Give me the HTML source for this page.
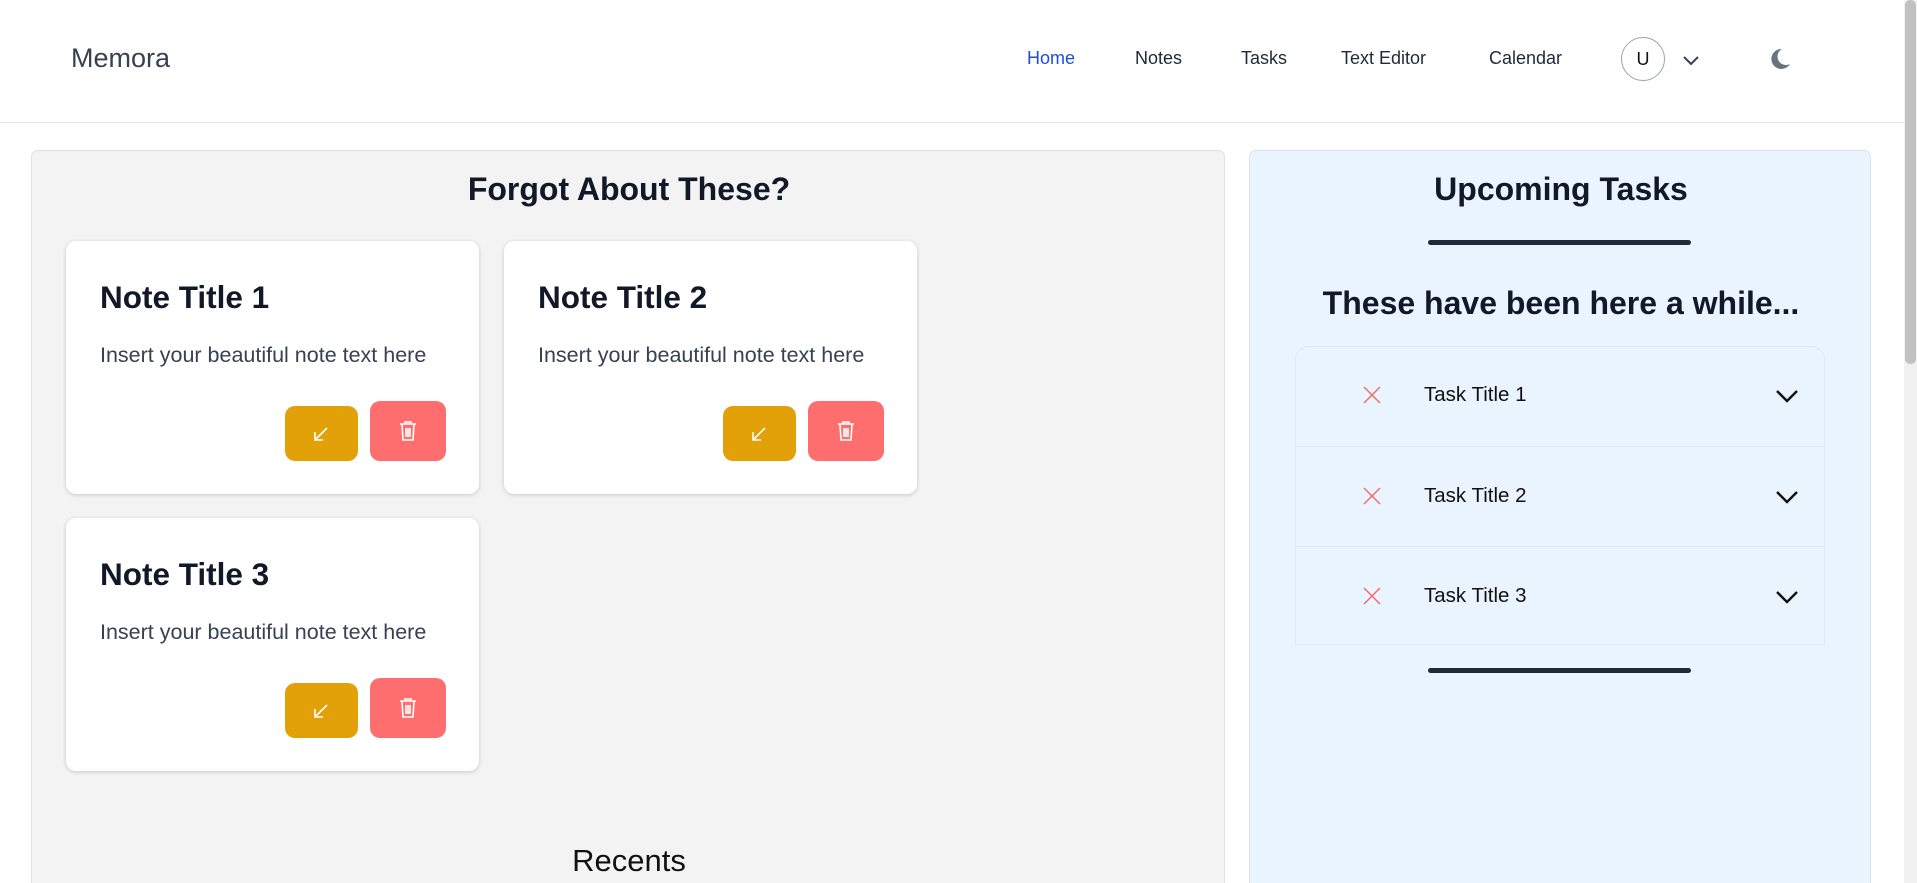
<!DOCTYPE html>
<html style="height:883px;overflow:hidden"><head><meta charset="utf-8"><style>
*{box-sizing:border-box;margin:0;padding:0}
body{width:1917px;height:883px;overflow:hidden;background:#fff;font-family:"Liberation Sans",sans-serif;position:relative;color:#111827}
.a{position:absolute}
header{position:absolute;left:0;top:0;width:1904px;height:123px;border-bottom:1px solid #e5e7eb;background:#fff}
.nav{position:absolute;top:48px;font-size:18px;color:#1f2937}
.panel{position:absolute;top:150px;height:733px;border-radius:7px 7px 0 0;border-bottom:none!important}
.h{position:absolute;font-weight:bold;font-size:32px;text-align:center;color:#111827}
.card{position:absolute;width:413px;height:253px;background:#fff;border-radius:10px;box-shadow:0 1px 4px rgba(0,0,0,.18)}
.card .t{position:absolute;left:34px;top:38px;font-size:31.5px;font-weight:bold;color:#111827}
.card .b{position:absolute;left:34px;top:102px;font-size:21.5px;color:#374151}
.y{position:absolute;left:219px;top:165px;width:73px;height:55px;background:#e2a108;border-radius:10px}
.r{position:absolute;left:304px;top:160px;width:76px;height:60px;background:#fe6e6e;border-radius:10px}
.row{position:absolute;left:0;width:529px;height:100px;border-top:1px solid #dfe7f0}
.row span{position:absolute;left:128px;top:37px;font-size:20.5px;color:#111}
.bar{position:absolute;left:1428px;width:263px;height:5px;background:#1f2937;border-radius:3px}
</style></head><body>
<header>
<div class="a" style="left:71px;top:43px;font-size:27px;color:#374151">Memora</div>
<div class="nav" style="left:1027px;color:#1d4ed8">Home</div>
<div class="nav" style="left:1135px">Notes</div>
<div class="nav" style="left:1241px">Tasks</div>
<div class="nav" style="left:1341px">Text Editor</div>
<div class="nav" style="left:1489px">Calendar</div>
<div class="a" style="left:1621px;top:37px;width:44px;height:44px;border:1px solid #9ca3af;border-radius:50%;text-align:center;line-height:42px;font-size:18px;color:#111">U</div>
<svg class="a" style="left:1681px;top:50px" width="20" height="20" viewBox="0 0 20 20"><path d="M3 7l7 7 7-7" fill="none" stroke="#374151" stroke-width="2"/></svg>
<svg class="a" style="left:1768px;top:47px" width="24" height="24" viewBox="0 0 24 24"><path d="M14 2A10 10 0 1 0 22 17 8 8 0 0 1 14 2z" fill="#6b7280"/></svg>
</header>
<div class="a" style="left:1904px;top:0;width:13px;height:883px;background:#f1f1f1"></div>
<div class="a" style="left:1905px;top:0;width:11px;height:364px;background:#c1c1c1;border-radius:5px"></div>

<div class="panel" style="left:31px;width:1194px;background:#f3f3f3;border:1px solid #e0e0e0">
<div class="h" style="left:0;width:1194px;top:20px">Forgot About These?</div>
<div class="a" style="left:0;width:1194px;top:692px;text-align:center;font-size:31px;color:#111">Recents</div>
</div>
<div class="card" style="left:66px;top:241px"><div class="t">Note Title 1</div><div class="b">Insert your beautiful note text here</div><div class="y"><svg class="a" style="left:26px;top:18px" width="20" height="20" viewBox="0 0 20 20"><path d="M16 4L4 16M4 8v8h8" fill="none" stroke="#fff" stroke-width="1.6"/></svg></div><div class="r"><svg class="a" style="left:28px;top:19px" width="20" height="22" viewBox="0 0 20 22"><path d="M2 4h16M7 4V2h6v2M4 4l1 16h10l1-16M8 8v9M10 8v9M12 8v9" fill="none" stroke="#fff" stroke-width="1.6"/></svg></div></div>
<div class="card" style="left:504px;top:241px"><div class="t">Note Title 2</div><div class="b">Insert your beautiful note text here</div><div class="y"><svg class="a" style="left:26px;top:18px" width="20" height="20" viewBox="0 0 20 20"><path d="M16 4L4 16M4 8v8h8" fill="none" stroke="#fff" stroke-width="1.6"/></svg></div><div class="r"><svg class="a" style="left:28px;top:19px" width="20" height="22" viewBox="0 0 20 22"><path d="M2 4h16M7 4V2h6v2M4 4l1 16h10l1-16M8 8v9M10 8v9M12 8v9" fill="none" stroke="#fff" stroke-width="1.6"/></svg></div></div>
<div class="card" style="left:66px;top:518px"><div class="t">Note Title 3</div><div class="b">Insert your beautiful note text here</div><div class="y"><svg class="a" style="left:26px;top:18px" width="20" height="20" viewBox="0 0 20 20"><path d="M16 4L4 16M4 8v8h8" fill="none" stroke="#fff" stroke-width="1.6"/></svg></div><div class="r"><svg class="a" style="left:28px;top:19px" width="20" height="22" viewBox="0 0 20 22"><path d="M2 4h16M7 4V2h6v2M4 4l1 16h10l1-16M8 8v9M10 8v9M12 8v9" fill="none" stroke="#fff" stroke-width="1.6"/></svg></div></div>

<div class="panel" style="left:1249px;width:622px;background:#eaf4fe;border:1px solid #d8e3ee">
<div class="h" style="left:0;width:622px;top:20px">Upcoming Tasks</div>
<div class="h" style="left:0;width:622px;top:134px">These have been here a while...</div>
</div>
<div class="bar" style="top:240px"></div>
<div class="bar" style="top:668px"></div>
<div class="a" style="left:1295px;top:346px;width:530px;height:299px;border:1px solid #dfe7f0;border-radius:14px 14px 0 0;overflow:hidden">
<div class="row" style="top:-1px;border-top:none"><svg class="a" style="left:66px;top:39px" width="20" height="20" viewBox="0 0 20 20"><path d="M2 2l16 16M18 2L2 18" stroke="#f26b6b" stroke-width="1.5"/></svg><span>Task Title 1</span><svg class="a" style="left:479px;top:42px" width="24" height="16" viewBox="0 0 24 16"><path d="M2 3l10 10L22 3" fill="none" stroke="#111" stroke-width="2.4"/></svg></div>
<div class="row" style="top:99px"><svg class="a" style="left:66px;top:39px" width="20" height="20" viewBox="0 0 20 20"><path d="M2 2l16 16M18 2L2 18" stroke="#f26b6b" stroke-width="1.5"/></svg><span>Task Title 2</span><svg class="a" style="left:479px;top:42px" width="24" height="16" viewBox="0 0 24 16"><path d="M2 3l10 10L22 3" fill="none" stroke="#111" stroke-width="2.4"/></svg></div>
<div class="row" style="top:199px"><svg class="a" style="left:66px;top:39px" width="20" height="20" viewBox="0 0 20 20"><path d="M2 2l16 16M18 2L2 18" stroke="#f26b6b" stroke-width="1.5"/></svg><span>Task Title 3</span><svg class="a" style="left:479px;top:42px" width="24" height="16" viewBox="0 0 24 16"><path d="M2 3l10 10L22 3" fill="none" stroke="#111" stroke-width="2.4"/></svg></div>
</div>
</body></html>
